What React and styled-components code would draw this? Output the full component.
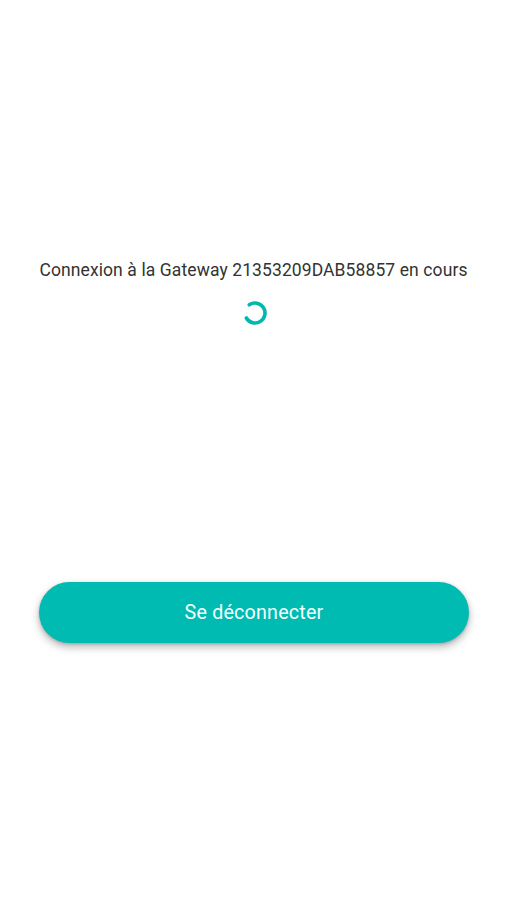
import React from "react";
import styled, { createGlobalStyle } from "styled-components";

const Global = createGlobalStyle`
  html, body { margin: 0; padding: 0; background: #ffffff; }
  body { font-family: Roboto, "Noto Sans", sans-serif; }
`;

const Page = styled.div`
  width: 507px;
  height: 900px;
  background: #fff;
  display: flex;
  flex-direction: column;
  align-items: center;
  box-sizing: border-box;
  padding-top: 259px;
`;

const Message = styled.div`
  font-size: 17.5px;
  line-height: 22px;
  color: #333333;
  letter-spacing: 0.1px;
  text-align: center;
  white-space: nowrap;
`;

const SpinnerWrap = styled.div`
  margin-top: 19px;
  width: 26px;
  height: 26px;
  margin-left: 2px;
`;

const Footer = styled.div`
  margin-top: 256px;
  width: 100%;
  display: flex;
  justify-content: center;
`;

const Button = styled.button`
  width: 430px;
  height: 61px;
  margin-left: 1px;
  border: none;
  border-radius: 31px;
  background: #00bbb1;
  color: #f4fffe;
  font-family: Roboto, "Noto Sans", sans-serif;
  font-size: 19.7px;
  letter-spacing: 0.2px;
  box-shadow: 0 4px 8px rgba(0, 0, 0, 0.28), 0 1px 3px rgba(0, 0, 0, 0.18);
  cursor: pointer;
`;

function Spinner() {
  const r = 10;
  const cx = 13, cy = 13;
  const a0 = (-125 * Math.PI) / 180;
  const a1 = (150 * Math.PI) / 180;
  const x0 = cx + r * Math.cos(a0), y0 = cy + r * Math.sin(a0);
  const x1 = cx + r * Math.cos(a1), y1 = cy + r * Math.sin(a1);
  return (
    <svg width="26" height="26" viewBox="0 0 26 26">
      <path
        d={`M ${x0} ${y0} A ${r} ${r} 0 1 1 ${x1} ${y1}`}
        fill="none"
        stroke="#00b8ad"
        strokeWidth="3.6"
        strokeLinecap="round"
      />
    </svg>
  );
}

export default function App() {
  return (
    <>
      <Global />
      <Page>
        <Message>Connexion à la Gateway 21353209DAB58857 en cours</Message>
        <SpinnerWrap>
          <Spinner />
        </SpinnerWrap>
        <Footer>
          <Button>Se déconnecter</Button>
        </Footer>
      </Page>
    </>
  );
}
